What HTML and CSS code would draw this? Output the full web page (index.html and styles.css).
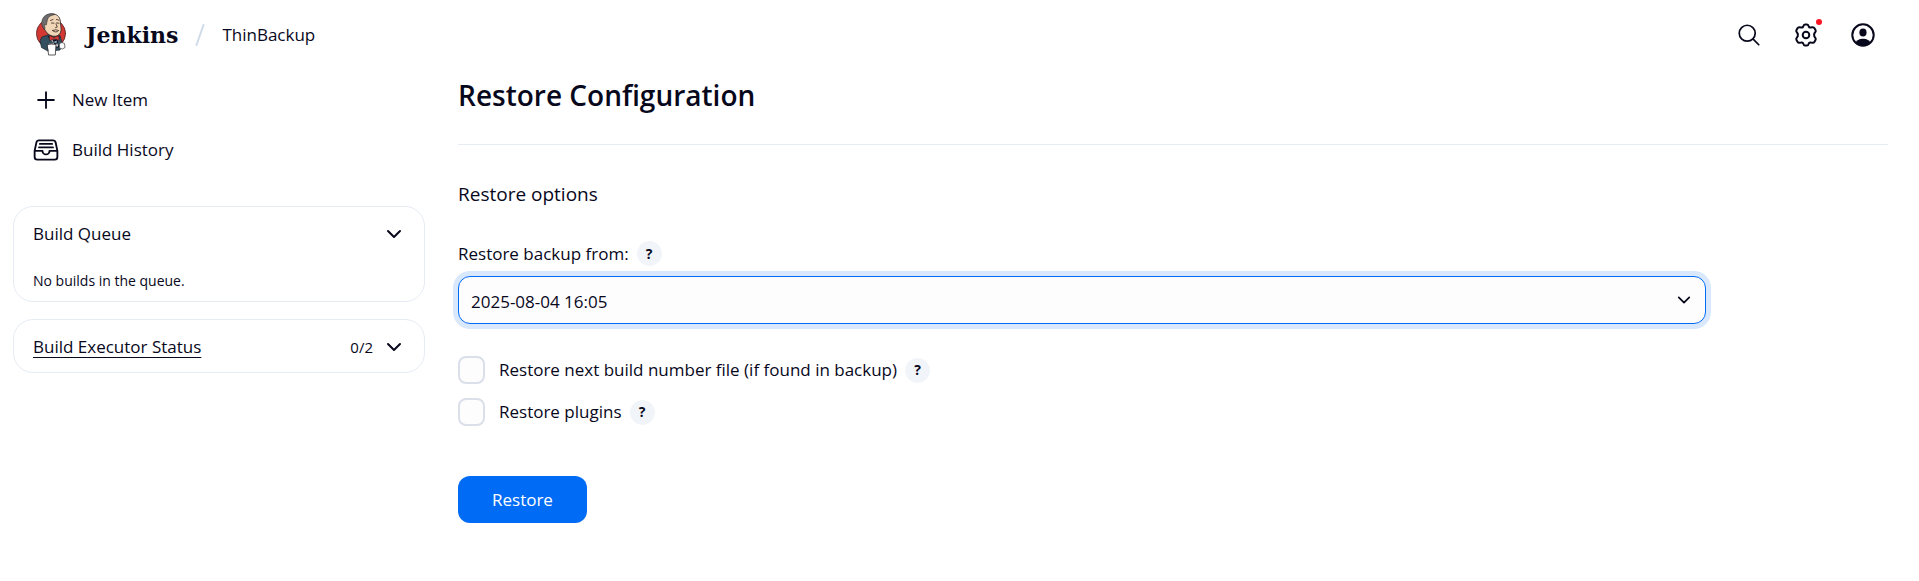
FILE: index.html
```html
<!DOCTYPE html>
<html lang="en">
<head>
<meta charset="utf-8">
<title>ThinBackup - Jenkins</title>
<link rel="stylesheet" href="styles.css">
</head>
<body>
<header class="header">
  <a class="brand" href="#">
    <svg class="brand-logo" viewBox="0 0 30 43" aria-hidden="true">
      <ellipse cx="15" cy="20.500" rx="14.600" ry="14.600" fill="#d33833" stroke="#3a2020" stroke-width=".7"/>
      <path d="M6 24 13 21.500 19 24 24 22.500 26 30 24 37 12 38 5.500 34.500 4.200 28Z" fill="#335061" stroke="#1d2b35" stroke-width=".8"/>
      <path d="M12.500 23.500 18 28 23 23.500 22.500 34 17 34Z" fill="#e8e6e2"/>
      <path d="M12 24 17 29 16 34 11 32ZM24 24 20.500 28 22 33 25 31Z" fill="#335061" stroke="none"/>
      <path d="M7.500 11C6.500 4.500 10.500 1 16 .9 22 .8 24.500 5 24.500 10L25 15C25.500 19 23.500 22.800 19.500 23.200 15 23.600 11 21 9.500 17.500 7.500 17 6.800 13 7.500 11Z" fill="#f0d6b7" stroke="#2b2422" stroke-width=".8"/>
      <path d="M7.800 16C4.500 12 5 5 10 2 13.500 .2 17 .6 19 1.500 14 2.500 11.500 4.500 11.200 8L10.300 12 8.500 11.500 9 16Z" fill="#6d6b6d" stroke="#2b2422" stroke-width=".5"/>
      <path d="M14.500 7.500 17 6.500M20.500 6.500 23 7.200M15.500 10 18 10.200M20.500 10 23 10.200M20 11 21.300 14 19.500 14.700M16.500 17.500Q20 16 22.700 17.500 20 20.500 16.500 17.500" fill="none" stroke="#49372f" stroke-width=".9"/>
      <path d="M13.300 22.500 18 24.500 22.700 22.500 23.200 27.500 18.500 26 14 27.700Z" fill="#d33833" stroke="#3a2020" stroke-width=".6"/>
      <path d="M18 28.200 21 26.800 21.500 30 18.500 30.500Z" fill="#8db1c7"/>
      <path d="M23.500 30.500Q26 28.500 28.500 30.500L29 34.500Q26.500 37.500 23.500 35Z" fill="#fff" stroke="#333" stroke-width=".7"/>
      <path d="M11.500 31.500H20L19.300 42H13Z" fill="#fff" stroke="#333" stroke-width=".8"/>
      <path d="M11.500 31.500Q15 29.500 20 31.500" fill="#fff" stroke="#333" stroke-width=".7"/>
    </svg>
    <span class="brand-name">Jenkins</span>
  </a>
  <svg class="slash" viewBox="0 0 10 24" aria-hidden="true"><path d="M8.500 2 1.500 22"/></svg>
  <a class="crumb" href="#">ThinBackup</a>
  <nav class="actions" aria-label="Tools">
    <button class="action" type="button" aria-label="Search">
      <svg class="icon-search" viewBox="0 0 512 512"><path d="M221 64a157 157 0 1 0 157 157A157 157 0 0 0 221 64ZM338 338 448 448"/></svg>
    </button>
    <button class="action" type="button" aria-label="Manage Jenkins">
      <svg class="icon-gear" viewBox="0 0 24 24"><path d="M9.300 3.400Q9.700 1.400 11 1.400H13Q14.300 1.400 14.700 3.400 15.200 4.900 16.800 4.500L18.500 4.200Q19.800 4 20.500 5.200L21.500 7Q22.200 8.200 21.200 9.300 19.800 10.700 20.200 12 19.800 13.300 21.200 14.700 22.200 15.800 21.500 17L20.500 18.800Q19.800 20 18.500 19.800L16.800 19.500Q15.200 19.100 14.700 20.600 14.300 22.600 13 22.600H11Q9.700 22.600 9.300 20.600 8.800 19.100 7.200 19.500L5.500 19.800Q4.200 20 3.500 18.800L2.500 17Q1.800 15.800 2.800 14.700 4.200 13.300 3.800 12 4.200 10.700 2.800 9.300 1.800 8.200 2.500 7L3.500 5.200Q4.200 4 5.500 4.200L7.200 4.500Q8.800 4.900 9.300 3.400Z"/><circle cx="12" cy="12" r="3.300"/></svg>
      <span class="dot"></span>
    </button>
    <button class="action" type="button" aria-label="Account">
      <svg class="icon-user" viewBox="0 0 24 24"><clipPath id="ring"><circle cx="12" cy="12" r="11"/></clipPath><ellipse cx="12" cy="9.600" rx="3.600" ry="4" fill="currentColor"/><ellipse cx="12" cy="20.800" rx="7.600" ry="5" fill="currentColor" clip-path="url(#ring)"/><circle cx="12" cy="12" r="10.700"/></svg>
    </button>
  </nav>
</header>

<div class="page">
  <aside class="side">
    <nav class="tasks">
      <a class="task" href="#"><svg viewBox="0 0 512 512" aria-hidden="true"><path d="M256 112v288M400 256H112"/></svg>New Item</a>
      <a class="task" href="#"><svg viewBox="0 0 512 512" aria-hidden="true"><path d="M384 80H128c-26 0-43 14-48 40L48 272v112a48 48 0 0 0 48 48h320a48 48 0 0 0 48-48V272l-32-152c-5-27-23-40-48-40ZM48 272h144M320 272h144M192 272a64 64 0 0 0 128 0M144 144h224M128 208h256"/></svg>Build History</a>
    </nav>
    <section class="card">
      <div class="card-head">
        <span class="card-title">Build Queue</span>
        <button class="toggle" type="button" aria-label="Collapse build queue"><svg class="chevron" viewBox="0 0 16 16"><path d="M2 5 8 11 14 5"/></svg></button>
      </div>
      <p class="card-text">No builds in the queue.</p>
    </section>
    <section class="card">
      <div class="card-head">
        <a class="card-title card-link" href="#">Build Executor Status</a>
        <span class="count">0/2</span>
        <button class="toggle" type="button" aria-label="Expand executor status"><svg class="chevron" viewBox="0 0 16 16"><path d="M2 5 8 11 14 5"/></svg></button>
      </div>
    </section>
  </aside>

  <main class="main">
    <h1 class="title">Restore Configuration</h1>
    <form class="form">
      <h2 class="section-title">Restore options</h2>
      <div class="label-row">
        <label for="backup">Restore backup from:</label>
        <button class="help" type="button" aria-label="Help for restore backup from">?</button>
      </div>
      <div class="select-wrap">
        <select class="select" id="backup"><option>2025-08-04 16:05</option></select>
        <svg class="chevron select-chevron" viewBox="0 0 16 16" aria-hidden="true"><path d="M2 5 8 11 14 5"/></svg>
      </div>
      <div class="checks">
        <div class="check-row">
          <input class="check" type="checkbox" id="next-build">
          <label for="next-build">Restore next build number file (if found in backup)</label>
          <button class="help" type="button" aria-label="Help for next build number">?</button>
        </div>
        <div class="check-row">
          <input class="check" type="checkbox" id="plugins">
          <label for="plugins">Restore plugins</label>
          <button class="help" type="button" aria-label="Help for plugins">?</button>
        </div>
      </div>
      <button class="submit" type="button">Restore</button>
    </form>
  </main>
</div>
</body>
</html>
```
FILE: styles.css
```css
:root {
  --text: #08081c;
  --line: #e6ebf4;
  --accent: #006cf5;
}

* {
  box-sizing: border-box;
}

body {
  margin: 0;
  background: #fff;
  color: var(--text);
  font: 17px/24px "Open Sans", "Noto Sans", sans-serif;
}

a {
  color: inherit;
  text-decoration: none;
}

button {
  margin: 0;
  padding: 0;
  border: 0;
  background: none;
  color: inherit;
  font: inherit;
}

svg {
  flex: none;
  fill: none;
  stroke: currentColor;
  stroke-linecap: round;
  stroke-linejoin: round;
}

.header {
  display: flex;
  align-items: center;
  height: 68px;
  padding: 1px 42px 0 36px;
}

.brand {
  display: flex;
  align-items: center;
  gap: 20px;
}

.brand-logo {
  width: 30px;
  height: 43px;
}

.brand-name {
  font: bold 22px/24px "DejaVu Serif", serif;
}

.slash {
  width: 10px;
  height: 24px;
  margin: 0 17px;
  stroke: #d0dbea;
  stroke-width: 2;
}

.actions {
  display: flex;
  gap: 29px;
  margin-left: auto;
}

.action {
  position: relative;
  display: grid;
  place-items: center;
  width: 28px;
  height: 28px;
}

.icon-search {
  width: 26px;
  height: 26px;
  stroke-width: 34;
}

.icon-gear,
.icon-user {
  width: 24px;
  height: 24px;
  stroke-width: 2;
}

.icon-user ellipse {
  stroke: none;
}

.dot {
  position: absolute;
  top: -2px;
  right: -2px;
  width: 6px;
  height: 6px;
  border-radius: 50%;
  background: #fe1420;
}

.page {
  display: grid;
  grid-template-columns: 412px minmax(0, 1fr);
  gap: 33px;
  padding: 0 31px 32px 13px;
}

.tasks {
  display: grid;
  padding: 7px 0 31px;
}

.task {
  display: flex;
  align-items: center;
  gap: 12px;
  height: 50px;
  padding: 0 20px 0 19px;
}

.task svg {
  width: 28px;
  height: 28px;
  stroke-width: 34;
}

.card {
  margin-bottom: 17px;
  padding: 15px 20px 13px 19px;
  border: 1px solid var(--line);
  border-radius: 20px;
}

.card-head {
  display: flex;
  align-items: center;
  gap: 11px;
}

.card-title {
  margin-right: auto;
}

.card-link {
  text-decoration: underline;
  text-decoration-thickness: 1px;
  text-underline-offset: 4px;
}

.card-text {
  margin: 25px 0 -3px;
  font-size: 14px;
  line-height: 20px;
}

.count {
  font-size: 15px;
}

.toggle {
  display: grid;
  place-items: center;
  width: 20px;
  height: 24px;
}

.chevron {
  width: 16px;
  height: 16px;
  stroke-width: 2;
}

.title {
  margin: 0;
  padding: 7px 0 29px;
  border-bottom: 1px solid var(--line);
  font-size: 28px;
  font-weight: 600;
  line-height: 40px;
}

.form {
  max-width: 1248px;
  padding-top: 35px;
}

.section-title {
  margin: 0;
  font-size: 19px;
  font-weight: 400;
  line-height: 28px;
}

.label-row {
  display: flex;
  align-items: center;
  gap: 8px;
  margin: 33px 0 10px;
}

.help {
  display: grid;
  place-items: center;
  width: 25px;
  height: 25px;
  border-radius: 50%;
  background: #f1f5f9;
  font-size: 14px;
  font-weight: 700;
  line-height: 20px;
}

.select-wrap {
  position: relative;
}

.select {
  display: block;
  width: 100%;
  height: 48px;
  padding: 3px 48px 0 12px;
  appearance: none;
  border: 1px solid var(--accent);
  border-radius: 12px;
  background: #fdfdfd;
  box-shadow: 0 0 0 5px #d9e8fd;
  color: inherit;
  font: inherit;
}

.select-chevron {
  position: absolute;
  top: 16px;
  right: 15px;
  width: 14px;
  pointer-events: none;
}

.checks {
  display: grid;
  gap: 14px;
  margin: 32px 0 50px;
}

.check-row {
  display: flex;
  align-items: center;
  gap: 8px;
  height: 28px;
}

.check {
  width: 27px;
  height: 28px;
  margin: 0 6px 0 0;
  appearance: none;
  border: 2px solid #dbdfea;
  border-radius: 8px;
  background: #fdfdfd;
}

.submit {
  height: 47px;
  padding: 0 34px;
  border-radius: 12px;
  background: var(--accent);
  color: #fff;
}
```
